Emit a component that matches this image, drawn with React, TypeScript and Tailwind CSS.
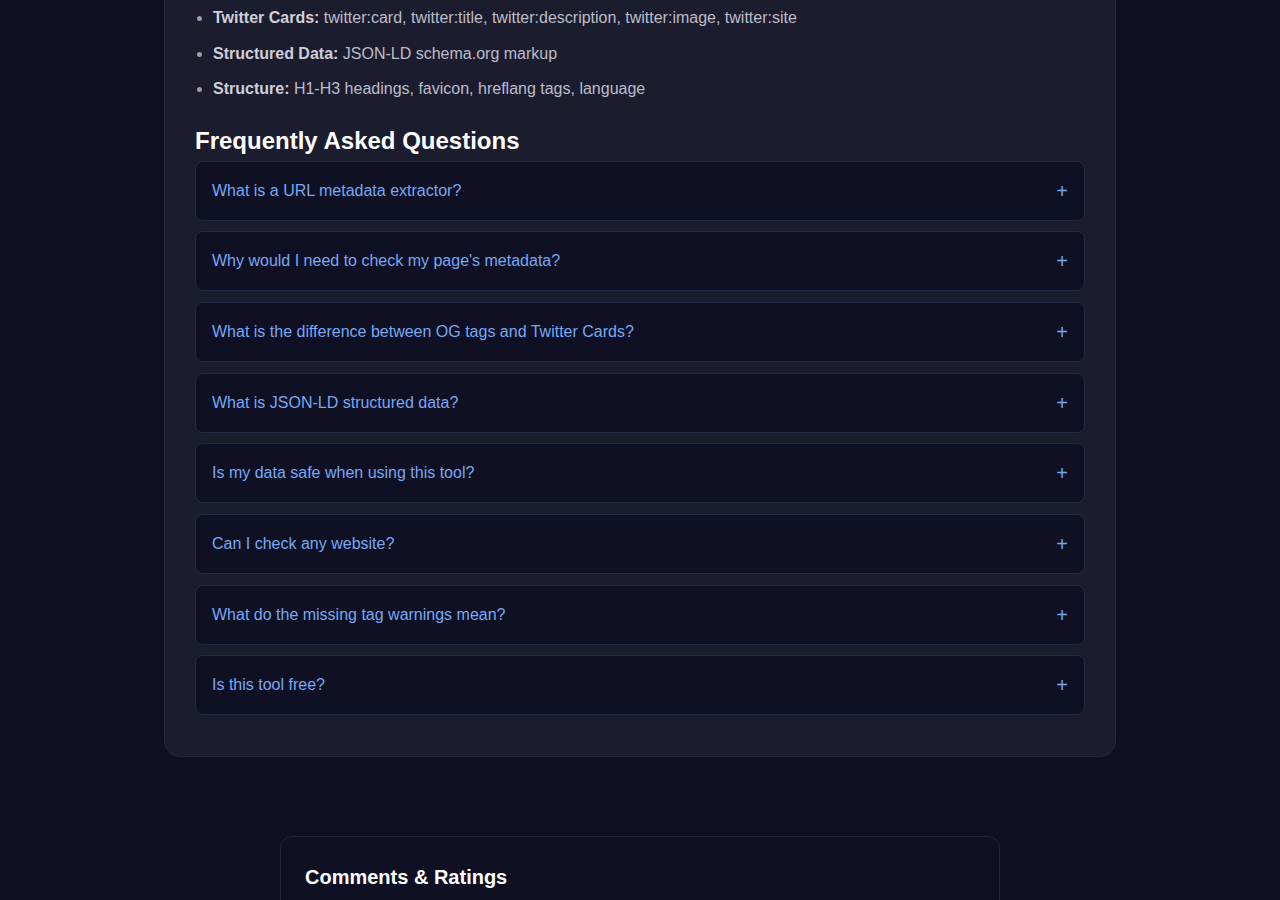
const features = [
  { label: 'Twitter Cards:', text: 'twitter:card, twitter:title, twitter:description, twitter:image, twitter:site' },
  { label: 'Structured Data:', text: 'JSON-LD schema.org markup' },
  { label: 'Structure:', text: 'H1-H3 headings, favicon, hreflang tags, language' }
];

const faqs = [
  'What is a URL metadata extractor?',
  "Why would I need to check my page's metadata?",
  'What is the difference between OG tags and Twitter Cards?',
  'What is JSON-LD structured data?',
  'Is my data safe when using this tool?',
  'Can I check any website?',
  'What do the missing tag warnings mean?',
  'Is this tool free?'
];

const FaqItem = ({ question }: { question: string }) => {
  return (
    <div className="mb-[10.7px] rounded-lg border border-[#272846] bg-[#0f1023]">
      <button className="flex w-full items-center justify-between px-4 py-[17px] text-left text-base leading-6 text-[#78a8f4]">
        <span>{question}</span>
        <span className="text-xl leading-6 text-[#6ea6f8]">+</span>
      </button>
    </div>
  );
};

const App = () => {
  return (
    <div className="min-h-[900px] overflow-hidden bg-[#0f1023] font-['Liberation_Sans',Arial,sans-serif]">
      <div className="mx-auto -mt-[26px] w-[952px] rounded-2xl border border-[#27283f] bg-[#1b1c2e] px-[30px] pt-[30px] pb-[30px]">
        <ul className="list-disc pl-[18px] text-base leading-[25.6px] text-[#bdbdc9] marker:text-[#9c9cab]">
          {features.map((f) => (
            <li key={f.label} className="mb-[10px]">
              <strong className="text-[#cfcfd8]">{f.label}</strong> {f.text}
            </li>
          ))}
        </ul>
        <h2 className="mt-[25px] mb-[5px] text-2xl leading-[28.8px] font-bold text-white">Frequently Asked Questions</h2>
        <div>
          {faqs.map((q) => (
            <FaqItem key={q} question={q} />
          ))}
        </div>
      </div>
      <div className="mx-auto mt-[79px] h-[200px] w-[720px] rounded-xl border border-[#26273f] bg-[#0f1023] px-6 pt-[26px]">
        <h3 className="text-xl leading-7 font-bold text-white">Comments &amp; Ratings</h3>
      </div>
    </div>
  );
};

export default App;
